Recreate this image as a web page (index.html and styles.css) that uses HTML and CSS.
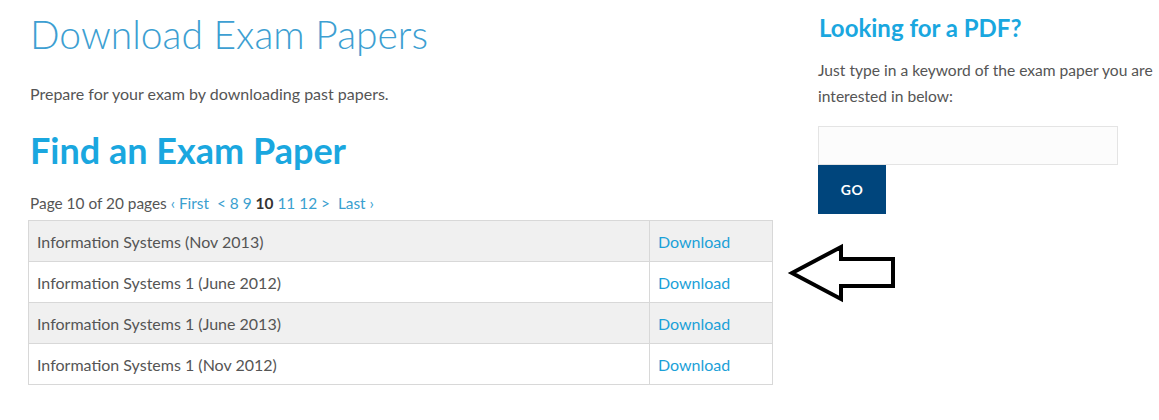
FILE: index.html
```html
<!DOCTYPE html>
<html lang="en">
<head>
    <meta charset="UTF-8">
    <title>Download Exam Papers</title>
    <link rel="stylesheet" href="styles.css">
</head>
<body>
    <div class="page">
        <!-- left column -->
        <main class="main">
            <h1 class="page-title">Download Exam Papers</h1>
            <p class="intro">Prepare for your exam by downloading past papers.</p>

            <h2 class="section-title">Find an Exam Paper</h2>

            <div class="pager">
                Page 10 of 20 pages
                <a href="#">&lsaquo; First</a>&nbsp;
                <a href="#">&lt;</a>
                <a href="#">8</a>
                <a href="#">9</a>
                <b>10</b>
                <a href="#">11</a>
                <a href="#">12</a>
                <a href="#">&gt;</a>&nbsp;
                <a href="#">Last &rsaquo;</a>
            </div>

            <div class="results">
                <table class="papers">
                    <tr>
                        <td>Information Systems (Nov 2013)</td>
                        <td class="dl"><a href="#">Download</a></td>
                    </tr>
                    <tr>
                        <td>Information Systems 1 (June 2012)</td>
                        <td class="dl"><a href="#">Download</a></td>
                    </tr>
                    <tr>
                        <td>Information Systems 1 (June 2013)</td>
                        <td class="dl"><a href="#">Download</a></td>
                    </tr>
                    <tr>
                        <td>Information Systems 1 (Nov 2012)</td>
                        <td class="dl"><a href="#">Download</a></td>
                    </tr>
                </table>

                <!-- hand-drawn pointer -->
                <svg class="pointer" width="112" height="62" viewBox="0 0 112 62">
                    <polygon points="6,31 55,5 55,17 107,17 107,44 55,44 55,57"
                             fill="none" stroke="#000" stroke-width="4" stroke-linejoin="miter"/>
                </svg>
            </div>
        </main>

        <!-- sidebar -->
        <aside class="sidebar">
            <h3 class="side-title">Looking for a PDF?</h3>
            <p class="side-text">Just type in a keyword of the exam paper you are interested in below:</p>
            <form class="search" onsubmit="return false">
                <input type="text" class="search-input">
                <button class="search-btn">GO</button>
            </form>
        </aside>
    </div>
</body>
</html>
```

FILE: styles.css
```css
* {
    margin: 0;
    padding: 0;
    box-sizing: border-box;
}

body {
    font-family: Lato, 'Open Sans', sans-serif;
    font-size: 16px;
    color: #555;
    background: #fff;
}

a {
    color: #1ba1d8;
    text-decoration: none;
}

.page {
    display: flex;
    gap: 45px;
    padding-left: 28px;
}

/* left column */
.main {
    width: 745px;
    flex-shrink: 0;
}

.page-title {
    font-weight: 300;
    font-size: 39px;
    line-height: 48px;
    color: #3d9fd2;
    margin: 10px 0 0 2px;
}

.intro {
    margin: 24px 0 0 2px;
    line-height: 24px;
}

.section-title {
    font-weight: 700;
    font-size: 36px;
    line-height: 44px;
    color: #1aa7df;
    margin: 22px 0 0 2px;
}

.pager {
    font-size: 15.4px;
    margin: 19px 0 0 2px;
    line-height: 24px;
}

.pager a {
    color: #3aa0cf;
}

.pager b {
    color: #333;
}

.results {
    position: relative;
    margin-top: 5px;
}

.papers {
    width: 745px;
    border-collapse: collapse;
}

.papers td {
    border: 1px solid #d8d8d8;
    height: 41px;
    padding: 0 8px;
    vertical-align: middle;
}

.papers tr:nth-child(odd) {
    background: #f0f0f0;
}

.papers .dl {
    width: 123px;
}

.pointer {
    position: absolute;
    left: 758px;
    top: 22px;
}

/* sidebar */
.sidebar {
    width: 345px;
}

.side-title {
    font-weight: 700;
    font-size: 24px;
    line-height: 30px;
    color: #1aa7df;
    margin-top: 13px;
    margin-left: 1px;
}

.side-text {
    font-size: 15.6px;
    margin-top: 14px;
    line-height: 26px;
}

.search {
    margin-top: 17px;
}

.search-input {
    display: block;
    width: 300px;
    height: 39px;
    border: 1px solid #e4e4e4;
    background: #fcfcfc;
    font: inherit;
    outline: none;
}

.search-btn {
    display: block;
    width: 68px;
    height: 49px;
    border: none;
    background: #00457c;
    color: #fff;
    font-family: inherit;
    font-weight: 700;
    font-size: 14px;
    letter-spacing: 0.5px;
}
```
